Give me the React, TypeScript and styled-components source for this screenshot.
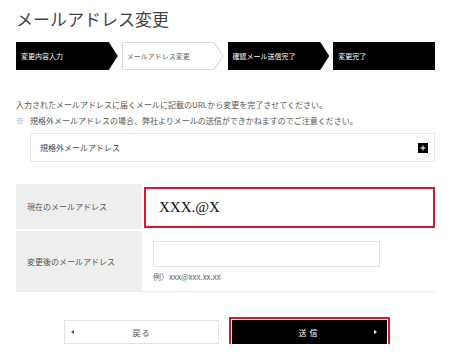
import React from "react";
import styled, { createGlobalStyle } from "styled-components";

const GlobalStyle = createGlobalStyle`
    body {
        margin: 0;
        background: #fff;
        font-family: "Noto Sans CJK JP", "Noto Sans", sans-serif;
        color: #555;
    }
`

const Page = styled.div`
    width: 419px;
    padding: 0 15px 0 16px;
`
const Title = styled.h1`
    margin: 0;
    padding-top: 7px;
    height: 35px;
    font-size: 17px;
    line-height: 24px;
    font-weight: 400;
    color: #444;
`
const Steps = styled.div`
    display: flex;
    gap: 4px;
    height: 28px;
`
const Step = styled.div<{ $active?: boolean; $last?: boolean }>`
    position: relative;
    flex: 1;
    display: flex;
    align-items: center;
    padding-left: 5px;
    font-size: 7px;
    color: ${p => (p.$active ? "#666" : "#fff")};
    z-index: 0;
    &::before, &::after {
        content: "";
        position: absolute;
        z-index: -1;
        clip-path: ${p => p.$last
            ? "none"
            : "polygon(0 0, calc(100% - 9px) 0, 100% 50%, calc(100% - 9px) 100%, 0 100%)"};
    }
    &::before {
        inset: 0;
        background: ${p => (p.$active ? "#dedede" : "#000")};
    }
    &::after {
        inset: 1px 1px 1px 1px;
        background: ${p => (p.$active ? "#fff" : "#000")};
    }
`
const Notes = styled.div`
    margin-top: 27px;
    font-size: 8px;
    line-height: 16px;
    color: #555;
`
const Note = styled.p`
    margin: 0;
    display: flex;
`
const Mark = styled.span`
    width: 14px;
    color: #888;
`
const Accordion = styled.div`
    margin: 4px 0 0 14px;
    height: 27px;
    border: 1px solid #e6e6e6;
    display: flex;
    align-items: center;
    justify-content: space-between;
    padding: 0 6px 0 9px;
    font-size: 8px;
    color: #444;
`
const PlusBox = styled.span`
    width: 10px;
    height: 10px;
    background: #000;
    display: flex;
    align-items: center;
    justify-content: center;
`
const Table = styled.div`
    margin-top: 22px;
    display: grid;
    grid-template-columns: 126px 1fr;
    grid-template-rows: 45px 60px;
    row-gap: 2px;
    border-bottom: 1px solid #ececec;
`
const Label = styled.div`
    background: #eeeeee;
    display: flex;
    align-items: center;
    padding-left: 11px;
    font-size: 8px;
    color: #555;
`
const Cell = styled.div`
    display: flex;
    flex-direction: column;
    justify-content: center;
    padding-left: 11px;
`
const Current = styled.div`
    margin: 3px 0 1px 2px;
    border: 2px solid #d4192f;
    display: flex;
    align-items: center;
    padding-left: 13px;
    font-family: "Liberation Serif", serif;
    font-size: 15px;
    color: #111;
`
const Input = styled.div`
    width: 225px;
    height: 24px;
    border: 1px solid #e3e3e3;
    margin-top: 1px;
`
const Example = styled.div`
    margin-top: 4px;
    font-size: 8px;
    color: #666;
`
const Buttons = styled.div`
    margin-top: 28px;
    display: flex;
    justify-content: center;
    gap: 13px;
`
const Button = styled.div<{ $primary?: boolean }>`
    position: relative;
    width: 155px;
    height: 24px;
    box-sizing: border-box;
    display: flex;
    align-items: center;
    justify-content: center;
    font-size: 8px;
    letter-spacing: ${p => (p.$primary ? "3px" : "1px")};
    background: ${p => (p.$primary ? "#000" : "#fff")};
    color: ${p => (p.$primary ? "#fff" : "#555")};
    border: 1px solid ${p => (p.$primary ? "#000" : "#e3e3e3")};
    outline: ${p => (p.$primary ? "2px solid #d4192f" : "none")};
    outline-offset: 1px;
`
const Arrow = styled.span<{ $dir: "left" | "right"; $color: string }>`
    position: absolute;
    top: 50%;
    margin-top: -2px;
    ${p => (p.$dir === "left" ? "left: 6px;" : "right: 9px;")}
    width: 0;
    height: 0;
    border-top: 2px solid transparent;
    border-bottom: 2px solid transparent;
    ${p => p.$dir === "left"
        ? `border-right: 3px solid ${p.$color};`
        : `border-left: 3px solid ${p.$color};`}
`

const App = () => {
    return (
        <Page>
            <GlobalStyle />
            <Title>メールアドレス変更</Title>
            <Steps>
                <Step>変更内容入力</Step>
                <Step $active>メールアドレス変更</Step>
                <Step>確認メール送信完了</Step>
                <Step $last>変更完了</Step>
            </Steps>
            <Notes>
                <Note>入力されたメールアドレスに届くメールに記載のURLから変更を完了させてください。</Note>
                <Note><Mark>※</Mark>規格外メールアドレスの場合、弊社よりメールの送信ができかねますのでご注意ください。</Note>
            </Notes>
            <Accordion>
                規格外メールアドレス
                <PlusBox>
                    <svg width="6" height="6" viewBox="0 0 6 6">
                        <path d="M3 0.5V5.5M0.5 3H5.5" stroke="#fff" strokeWidth="1" />
                    </svg>
                </PlusBox>
            </Accordion>
            <Table>
                <Label>現在のメールアドレス</Label>
                <Current>XXX.@X</Current>
                <Label>変更後のメールアドレス</Label>
                <Cell>
                    <Input />
                    <Example>例）xxx@xxx.xx.xx</Example>
                </Cell>
            </Table>
            <Buttons>
                <Button>
                    <Arrow $dir="left" $color="#555" />
                    戻る
                </Button>
                <Button $primary>
                    送信
                    <Arrow $dir="right" $color="#fff" />
                </Button>
            </Buttons>
        </Page>
    );
};

export default App;
